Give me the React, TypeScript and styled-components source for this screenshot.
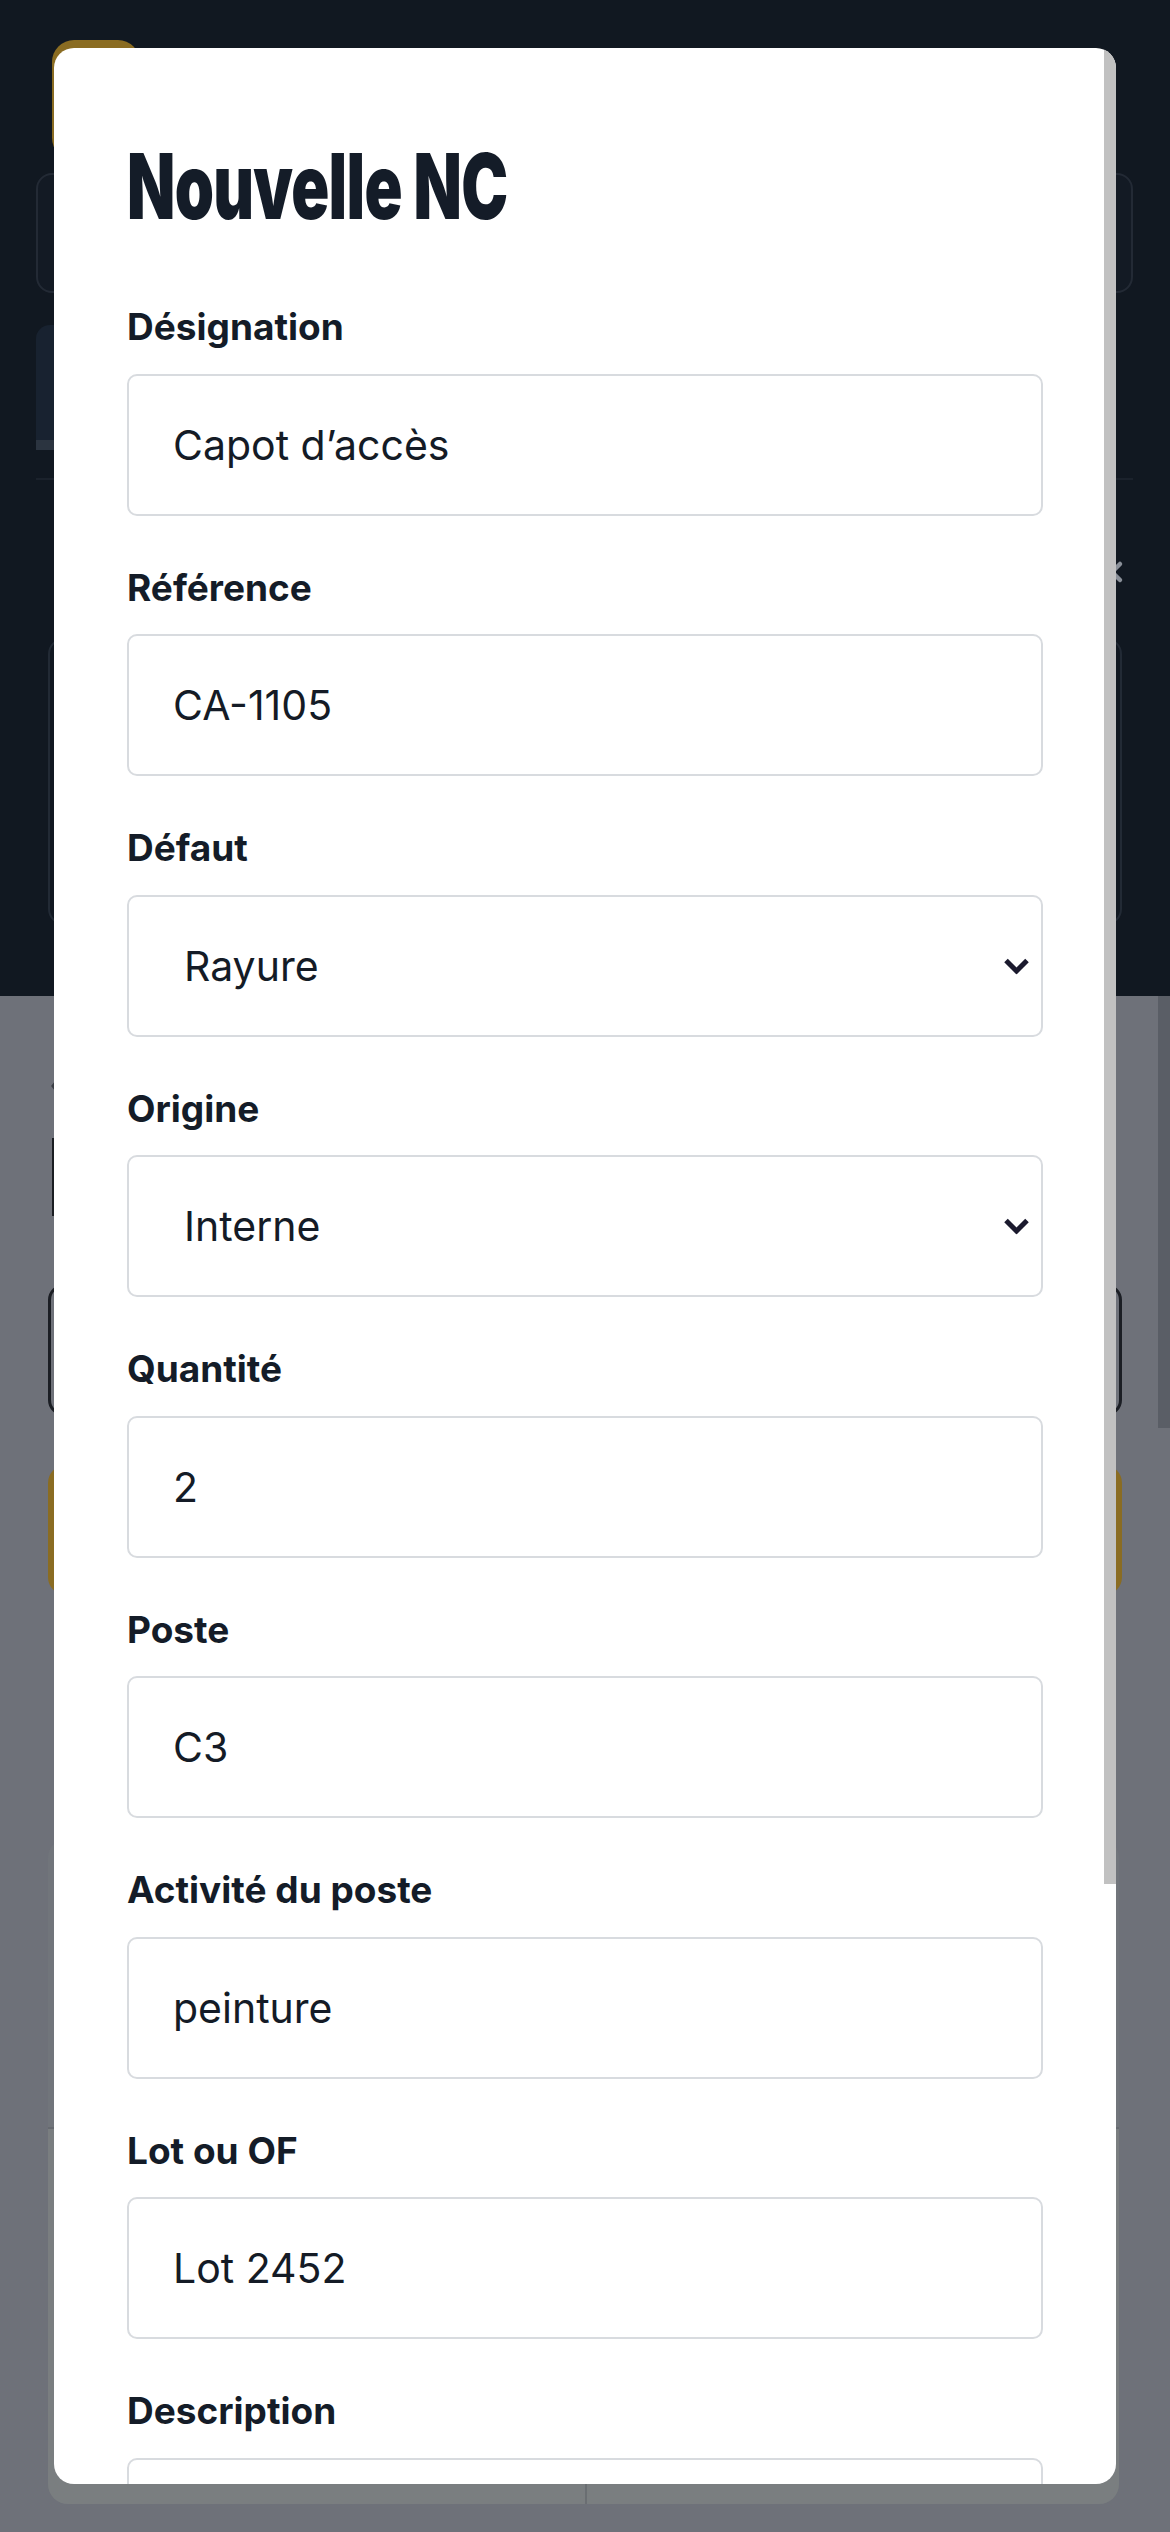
import React from 'react'
import styled, { createGlobalStyle } from 'styled-components'

const GlobalStyle = createGlobalStyle`
  html, body {
    margin: 0;
    padding: 0;
  }
  body {
    background: #6e7179;
    font-family: Inter, "Noto Sans", sans-serif;
  }
  * {
    box-sizing: border-box;
  }
`

// page behind the dialog (already dimmed by the backdrop)

const Page = styled.div`
  position: relative;
  width: 1170px;
  height: 2532px;
  overflow: hidden;
  background: #6e7179;
`

const Header = styled.header`
  height: 996px;
  background: #111821;
  padding: 40px 37px 0 36px;
  display: flex;
  flex-direction: column;
`

const Logo = styled.div`
  width: 88px;
  height: 120px;
  margin-left: 16px;
  border-radius: 22px;
  background: #8a6c22;
`

const SearchBox = styled.div`
  margin-top: 13px;
  height: 120px;
  border: 2px solid #232a35;
  border-radius: 16px;
  background: #131a24;
`

const TabsRow = styled.div`
  margin-top: 32px;
  display: flex;
  border-bottom: 2px solid #1b222c;
  padding-bottom: 28px;
`

const Tab = styled.div`
  width: 320px;
  height: 125px;
  background: #182230;
  border-bottom: 10px solid #2b3440;
  border-radius: 14px 14px 0 0;
`

const FilterRow = styled.div`
  margin-top: 62px;
  height: 60px;
  display: flex;
  align-items: center;
  justify-content: flex-end;
`

const CloseIcon = styled.svg`
  width: 24px;
  height: 24px;
  margin-right: 9px;
`

const ResultBox = styled.div`
  margin: 36px 11px 0 12px;
  height: 287px;
  border: 2px solid #222a35;
  border-radius: 16px;
`

const Content = styled.main`
  padding: 77px 48px 0 48px;
  display: flex;
  flex-direction: column;
`

const BackChevron = styled.svg`
  width: 14px;
  height: 26px;
  margin-left: 2px;
`

const TitleStem = styled.div`
  margin: 39px 0 0 4px;
  width: 40px;
  height: 78px;
  background: #1a1d22;
`

const FilterBox = styled.div`
  margin-top: 68px;
  height: 132px;
  border: 3px solid #1b1e24;
  border-radius: 16px;
`

const YellowAction = styled.div`
  margin-top: 49px;
  height: 130px;
  border-radius: 18px;
  background: #8a6c22;
`

const ListCard = styled.div`
  margin: 243px 3px 0 0;
  height: 666px;
  border-radius: 20px;
  background: #71757b;
  overflow: hidden;
  display: flex;
  flex-direction: column;
`

const CardBody = styled.div`
  height: 291px;
  border-bottom: 2px solid #666a70;
`

const CardFooter = styled.div`
  flex: 1;
  display: grid;
  grid-template-columns: 539px 1fr;
  background: #7a7e80;
`

const FooterCell = styled.div<{ divided?: boolean }>`
  border-right: ${({ divided }) => (divided ? '2px solid #6a6e72' : 'none')};
`

const PageScroll = styled.div`
  position: absolute;
  right: 0;
  top: 996px;
  width: 12px;
  height: 432px;
  background: #5a5e66;
`

// dialog

const Dialog = styled.div`
  position: fixed;
  top: 48px;
  left: 54px;
  width: 1062px;
  height: 2436px;
  background: #ffffff;
  border-radius: 20px;
  overflow: hidden;
`

const DialogBody = styled.div`
  height: 100%;
  overflow: hidden;
  padding: 93px 73px 0 73px;
`

const ScrollThumb = styled.div`
  position: absolute;
  top: 0;
  right: 0;
  width: 12px;
  height: 1836px;
  background: #c1c1c1;
`

const Title = styled.h2`
  margin: 0 0 73px 0;
  font-family: Inter, "DejaVu Sans", sans-serif;
  font-size: 91px;
  line-height: 91px;
  font-weight: 900;
  letter-spacing: -1px;
  color: #141c28;
  transform: scaleX(0.69);
  transform-origin: left center;
  white-space: nowrap;
`

const Field = styled.div`
  margin-bottom: 50px;
`

const Label = styled.label`
  display: block;
  margin-bottom: 24.5px;
  font-size: 37px;
  line-height: 44px;
  font-weight: 700;
  color: #141c28;
`

const TextInput = styled.input`
  display: block;
  width: 100%;
  height: 142px;
  padding: 0 30px 0 44px;
  border: 2px solid #d8dbdf;
  border-radius: 10px;
  background: #ffffff;
  font-family: Inter, "Noto Sans", sans-serif;
  font-size: 41px;
  color: #141b26;
  outline: none;
`

const SelectWrap = styled.div`
  position: relative;
`

const Select = styled.select`
  display: block;
  width: 100%;
  height: 142px;
  padding: 0 60px 0 55px;
  border: 2px solid #d8dbdf;
  border-radius: 10px;
  background: #ffffff;
  font-family: Inter, "Noto Sans", sans-serif;
  font-size: 41px;
  color: #141b26;
  appearance: none;
  outline: none;
`

const Chevron = styled.svg`
  position: absolute;
  right: 13px;
  top: 50%;
  width: 27px;
  height: 17px;
  transform: translateY(-50%);
  pointer-events: none;
`

const TextArea = styled.textarea`
  display: block;
  width: 100%;
  height: 330px;
  padding: 36px 44px;
  border: 2px solid #d8dbdf;
  border-radius: 10px;
  font-family: Inter, "Noto Sans", sans-serif;
  font-size: 41px;
  color: #141b26;
  resize: none;
  outline: none;
`

type SelectFieldProps = {
  label: string
  value: string
  options: string[]
}

const SelectField: React.FC<SelectFieldProps> = ({ label, value, options }) => (
  <Field>
    <Label>{label}</Label>
    <SelectWrap>
      <Select defaultValue={value}>
        {options.map(o => (
          <option key={o}>{o}</option>
        ))}
      </Select>
      <Chevron viewBox="0 0 27 17">
        <path
          d="M3 3 L13.5 13.5 L24 3"
          fill="none"
          stroke="#1b1a2e"
          strokeWidth="5"
        />
      </Chevron>
    </SelectWrap>
  </Field>
)

const InputField: React.FC<{ label: string; value: string }> = ({
  label,
  value
}) => (
  <Field>
    <Label>{label}</Label>
    <TextInput defaultValue={value} />
  </Field>
)

const App: React.FC = () => {
  return (
    <>
      <GlobalStyle />
      <Page>
        <Header>
          <Logo />
          <SearchBox />
          <TabsRow>
            <Tab />
          </TabsRow>
          <FilterRow>
            <CloseIcon viewBox="0 0 24 24">
              <path
                d="M4 4 L20 20 M20 4 L4 20"
                stroke="#8a9099"
                strokeWidth="4.5"
                strokeLinecap="round"
              />
            </CloseIcon>
          </FilterRow>
          <ResultBox />
        </Header>
        <Content>
          <BackChevron viewBox="0 0 14 26">
            <path
              d="M11 3 L3 13 L11 23"
              fill="none"
              stroke="#3a3e45"
              strokeWidth="3"
            />
          </BackChevron>
          <TitleStem />
          <FilterBox />
          <YellowAction />
          <ListCard>
            <CardBody />
            <CardFooter>
              <FooterCell divided />
              <FooterCell />
            </CardFooter>
          </ListCard>
        </Content>
        <PageScroll />
      </Page>

      <Dialog>
        <DialogBody>
          <Title>Nouvelle NC</Title>
          <InputField label="Désignation" value="Capot d’accès" />
          <InputField label="Référence" value="CA-1105" />
          <SelectField
            label="Défaut"
            value="Rayure"
            options={['Rayure', 'Choc', 'Cote hors tolérance', 'Autre']}
          />
          <SelectField
            label="Origine"
            value="Interne"
            options={['Interne', 'Fournisseur', 'Client']}
          />
          <InputField label="Quantité" value="2" />
          <InputField label="Poste" value="C3" />
          <InputField label="Activité du poste" value="peinture" />
          <InputField label="Lot ou OF" value="Lot 2452" />
          <Field>
            <Label>Description</Label>
            <TextArea />
          </Field>
        </DialogBody>
        <ScrollThumb />
      </Dialog>
    </>
  )
}

export default App
